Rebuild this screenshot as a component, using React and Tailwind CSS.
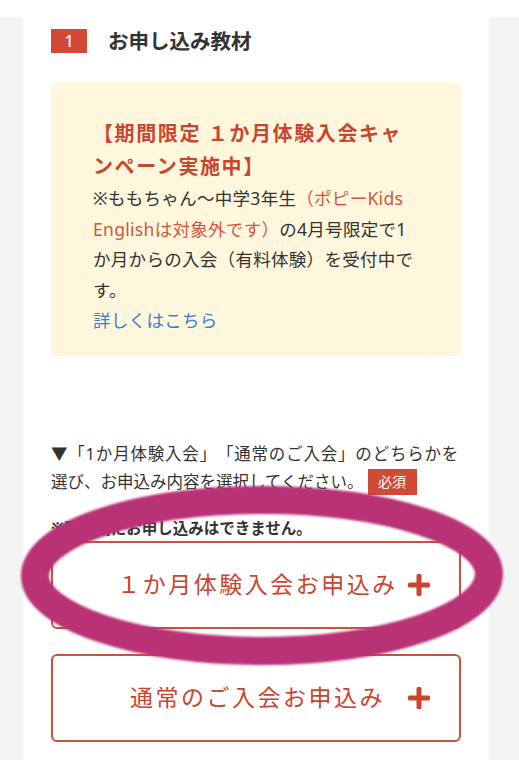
import React from "react";

function Plus() {
  return (
    <svg width="22" height="22" viewBox="0 0 22 22" className="block">
      <rect x="8.5" y="0" width="5" height="22" rx="1.5" fill="#c9452f" />
      <rect x="0" y="8.5" width="22" height="5" rx="1.5" fill="#c9452f" />
    </svg>
  );
}

function ApplyButton({ label }) {
  return (
    <button className="grid h-[88px] w-full grid-cols-[1fr_auto_1fr] items-center rounded-[6px] border-2 border-[#c9513e] bg-white px-[29px]">
      <span />
      <span className="pl-[3px] text-[23px] tracking-[2.5px] text-[#c9452f]">{label}</span>
      <span className="flex justify-end">
        <Plus />
      </span>
    </button>
  );
}

export default function App() {
  return (
    <div
      className="relative bg-white pt-[17px] [text-spacing-trim:space-all]"
      style={{ fontFamily: '"Noto Sans", "Noto Sans CJK JP", sans-serif' }}
    >
      <div className="bg-[#f4f4f4] pl-[23px] pr-[30px]">
        <div className="bg-white pl-[28px] pr-[28px] pt-[12px] pb-[18px] text-[#333]">
          {/* header */}
          <div className="flex items-center">
            <div className="flex h-[24px] w-[36px] items-center justify-center bg-[#d24a37] text-[16px] font-medium text-white">
              1
            </div>
            <div className="ml-[21px] text-[20.5px] font-bold leading-[24px] text-[#333]">
              お申し込み教材
            </div>
          </div>

          {/* campaign box */}
          <div className="mt-[29px] rounded-[6px] bg-[#fef7dd] px-[42px] pt-[35px] pb-[20px] whitespace-nowrap">
            <p className="text-[20px] font-bold leading-[33px] tracking-[1.6px] text-[#c9452f]">
              【期間限定 １か月体験入会キャ
              <br />
              ンペーン実施中】
            </p>
            <p className="text-[17.5px] leading-[30.5px] tracking-[0.3px] text-[#333]">
              ※ももちゃん〜中学3年生<span className="text-[#d0563f]">（ポピーKids</span>
              <br />
              <span className="text-[#d0563f]">Englishは対象外です）</span>の4月号限定で1
              <br />
              か月からの入会（有料体験）を受付中で
              <br />
              す。
            </p>
            <p className="text-[17.5px] leading-[30.5px] tracking-[0.3px] text-[#3a80d2]">詳しくはこちら</p>
          </div>

          {/* instructions */}
          <div className="mt-[84px] whitespace-nowrap text-[16.5px] leading-[28px] text-[#333]">
            <p className="tracking-[0.8px]">▼「1か月体験入会」「通常のご入会」のどちらかを</p>
            <p className="flex items-center">
              選び、お申込み内容を選択してください。
              <span className="ml-[4px] inline-flex h-[26px] w-[49px] items-center justify-center bg-[#d04a35] text-[14px] text-white">
                必須
              </span>
            </p>
          </div>
          <p className="mt-[20px] text-[15.5px] font-bold leading-[24px] text-[#333]">
            ※同時期にお申し込みはできません。
          </p>

          <div className="mt-[1px] flex flex-col gap-[25px]">
            <ApplyButton label="１か月体験入会お申込み" />
            <ApplyButton label="通常のご入会お申込み" />
          </div>
        </div>
      </div>
      <div className="h-[7px] bg-white" />

      {/* hand-drawn annotation ring */}
      <svg
        className="pointer-events-none absolute left-0 top-0"
        width="519"
        height="768"
        viewBox="0 0 519 768"
      >
        <defs>
          <filter id="soft" x="-10%" y="-10%" width="120%" height="120%">
            <feGaussianBlur stdDeviation="0.8" />
          </filter>
        </defs>
        <path
          d="M35 576 C35 534 137 500 262 500 C387 500 489 533 489 574 C489 616 387 651 262 651 C137 651 35 616 35 576 Z"
          fill="none"
          stroke="#b83174"
          strokeWidth="28"
          filter="url(#soft)"
        />
      </svg>
    </div>
  );
}
